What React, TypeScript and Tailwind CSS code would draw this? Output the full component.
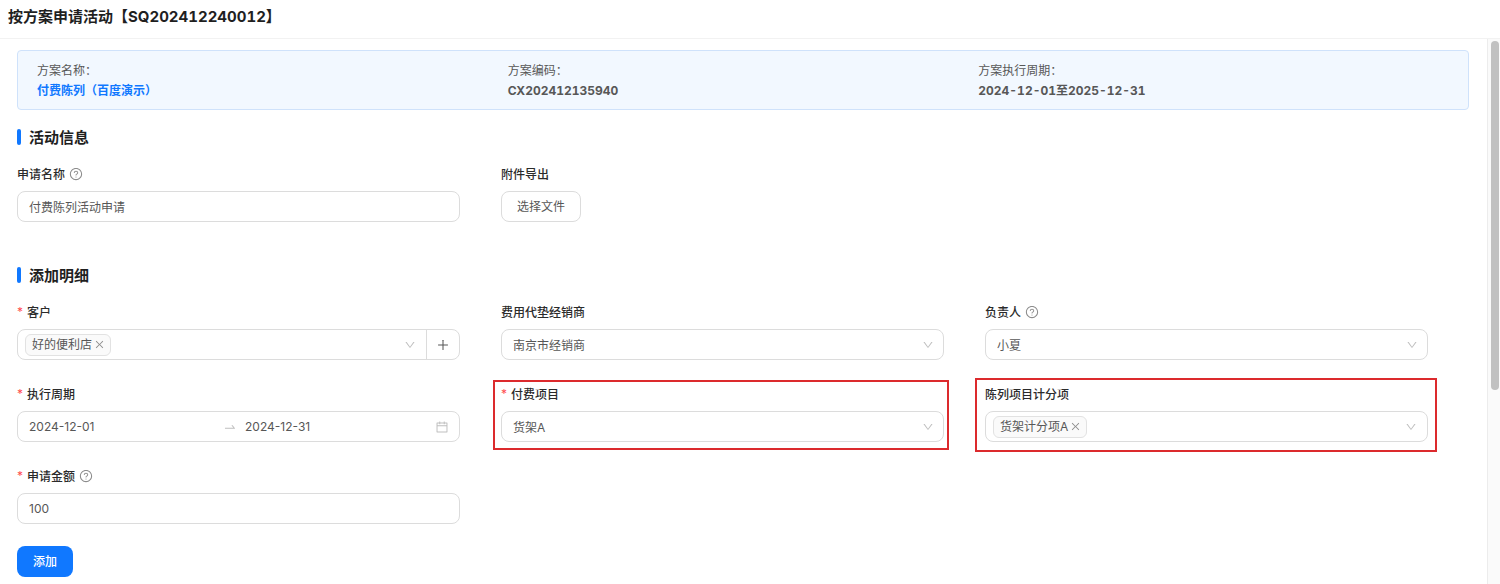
import { useState, type ReactNode } from "react";
import {
  AiOutlineCalendar,
  AiOutlineClose,
  AiOutlineDown,
  AiOutlinePlus,
  AiOutlineQuestionCircle,
  AiOutlineSwapRight,
} from "react-icons/ai";

const CONTROL =
  "h-[31px] w-full rounded-lg border border-[#dcdcdc] bg-white px-[11px] text-xs text-[#575757] outline-none focus:border-[#1078ff]";

function SectionTitle({ children }: { children: ReactNode }) {
  return (
    <h2 className="flex h-6 items-center gap-2 text-[15px] font-semibold text-[#1f1f1f]">
      <span className="h-4 w-1 rounded-xs bg-[#1078ff]" />
      <span className="pt-px">{children}</span>
    </h2>
  );
}

type FieldProps = {
  id: string;
  label: string;
  required?: boolean;
  help?: boolean;
  outline?: string;
  children: ReactNode;
};

function Field({ id, label, required, help, outline, children }: FieldProps) {
  return (
    <div className="relative flex flex-col gap-[7px]">
      <div className="flex h-5 items-center gap-1">
        {required && <span className="w-[6px] text-xs text-[#ff4d4f]">*</span>}
        <label htmlFor={id} className="pt-[2px] text-xs font-medium text-[#2b2b2b]">
          {label}
        </label>
        {help && <AiOutlineQuestionCircle className="size-[14px] text-[#8c8c8c]" />}
      </div>
      {children}
      {outline && (
        <div className={`pointer-events-none absolute border-2 border-[#dc2a2d] ${outline}`} />
      )}
    </div>
  );
}

function Select({ id, options }: { id: string; options: string[] }) {
  return (
    <div className="grid items-center">
      <select id={id} className={`${CONTROL} col-start-1 row-start-1 appearance-none pt-[2px]`}>
        {options.map((o) => (
          <option key={o}>{o}</option>
        ))}
      </select>
      <AiOutlineDown className="pointer-events-none col-start-1 row-start-1 mr-[10px] size-3 justify-self-end text-[#bfbfbf]" />
    </div>
  );
}

function TagSelect({ id, initial, addon }: { id: string; initial: string[]; addon?: boolean }) {
  const [tags, setTags] = useState(initial);
  return (
    <div className="flex h-[31px] rounded-lg border border-[#dcdcdc] bg-white">
      <div className="flex min-w-0 flex-1 items-center gap-1 pr-[10px] pl-[7px]">
        {tags.map((t) => (
          <span
            key={t}
            className="flex h-[22px] shrink-0 items-center gap-[2px] rounded-md border border-[#e2e2e2] bg-[#fafafa] pr-[5px] pl-[6px] text-xs text-[#575757]"
          >
            {t}
            <button
              type="button"
              aria-label={`移除${t}`}
              onClick={() => setTags(tags.filter((x) => x !== t))}
            >
              <AiOutlineClose className="size-[11px] text-[#8c8c8c]" />
            </button>
          </span>
        ))}
        <input id={id} role="combobox" aria-expanded="false" className="min-w-0 flex-1 text-xs outline-none" />
        <AiOutlineDown className="size-3 shrink-0 text-[#bfbfbf]" />
      </div>
      {addon && (
        <button
          type="button"
          aria-label="新增客户"
          className="flex w-[33px] items-center justify-center border-l border-[#dcdcdc]"
        >
          <AiOutlinePlus className="size-[14px] text-[#575757]" />
        </button>
      )}
    </div>
  );
}

function SchemeItem({ label, children }: { label: string; children: ReactNode }) {
  return (
    <div>
      <dt className="font-normal">{label}</dt>
      <dd className="font-bold">{children}</dd>
    </div>
  );
}

export default function App() {
  return (
    <div className="flex min-h-screen flex-col bg-white font-['Inter','Noto_Sans_CJK_SC',sans-serif] text-xs text-[#575757]">
      <header className="flex h-[39px] items-center border-b border-[#f2f2f2] px-2 pb-1">
        <h1 className="text-[15px] font-bold text-[#1f1f1f] tabular-nums">按方案申请活动【SQ202412240012】</h1>
      </header>
      <div className="flex flex-1">
        <main className="min-w-0 flex-1 pt-[11px] pr-[18px] pl-[17px]">
          <dl className="grid grid-cols-3 rounded-sm border border-[#cfe2fb] bg-[#f2f8ff] px-[19px] pt-[10px] pb-2 leading-5 tabular-nums">
            <SchemeItem label="方案名称：">
              <a href="#scheme" className="text-[#1078ff]">
                付费陈列（百度演示）
              </a>
            </SchemeItem>
            <SchemeItem label="方案编码：">CX202412135940</SchemeItem>
            <SchemeItem label="方案执行周期：">2024-12-01至2025-12-31</SchemeItem>
          </dl>

          <form onSubmit={(e) => e.preventDefault()}>
            <section className="mt-[15px]">
              <SectionTitle>活动信息</SectionTitle>
              <div className="mt-[15px] grid grid-cols-3 gap-x-[41px] pr-[41px]">
                <Field id="name" label="申请名称" help>
                  <input id="name" className={CONTROL} defaultValue="付费陈列活动申请" />
                </Field>
                <Field id="file" label="附件导出">
                  <button
                    id="file"
                    type="button"
                    className="h-[31px] self-start rounded-lg border border-[#dcdcdc] px-[15px] text-xs text-[#575757]"
                  >
                    选择文件
                  </button>
                </Field>
              </div>
            </section>

            <section className="mt-[41px]">
              <SectionTitle>添加明细</SectionTitle>
              <div className="mt-[15px] grid grid-cols-3 gap-x-[41px] gap-y-6 pr-[41px]">
                <Field id="customer" label="客户" required>
                  <TagSelect id="customer" initial={["好的便利店"]} addon />
                </Field>
                <Field id="dealer" label="费用代垫经销商">
                  <Select id="dealer" options={["南京市经销商"]} />
                </Field>
                <Field id="owner" label="负责人" help>
                  <Select id="owner" options={["小夏"]} />
                </Field>
                <Field id="start" label="执行周期" required>
                  <div className="flex h-[31px] items-center rounded-lg border border-[#dcdcdc] pr-[10px] pl-[11px]">
                    <input
                      id="start"
                      className="min-w-0 flex-1 pr-1 outline-none"
                      defaultValue="2024-12-01"
                    />
                    <AiOutlineSwapRight className="mr-2 size-[14px] shrink-0 text-[#bfbfbf]" />
                    <input
                      aria-label="结束日期"
                      className="min-w-0 flex-1 outline-none"
                      defaultValue="2024-12-31"
                    />
                    <AiOutlineCalendar className="size-[14px] shrink-0 text-[#bfbfbf]" />
                  </div>
                </Field>
                <Field
                  id="project"
                  label="付费项目"
                  required
                  outline="-top-1 -right-[5px] -bottom-2 -left-2"
                >
                  <Select id="project" options={["货架A"]} />
                </Field>
                <Field
                  id="score"
                  label="陈列项目计分项"
                  outline="-top-[6px] -right-[9px] -bottom-[10px] -left-[10px]"
                >
                  <TagSelect id="score" initial={["货架计分项A"]} />
                </Field>
                <Field id="amount" label="申请金额" required help>
                  <input id="amount" className={CONTROL} defaultValue="100" />
                </Field>
              </div>
            </section>

            <button
              type="submit"
              className="mt-[22px] h-[31px] rounded-lg bg-[#1078ff] px-4 text-xs font-medium text-white"
            >
              添加
            </button>
          </form>
        </main>
        <div aria-hidden="true" className="w-[13px] border-l border-[#ececec] bg-[#fafafa] pt-[2px] pl-[3px]">
          <div className="h-[349px] w-2 rounded-full bg-[#c1c1c1]" />
        </div>
      </div>
    </div>
  );
}
